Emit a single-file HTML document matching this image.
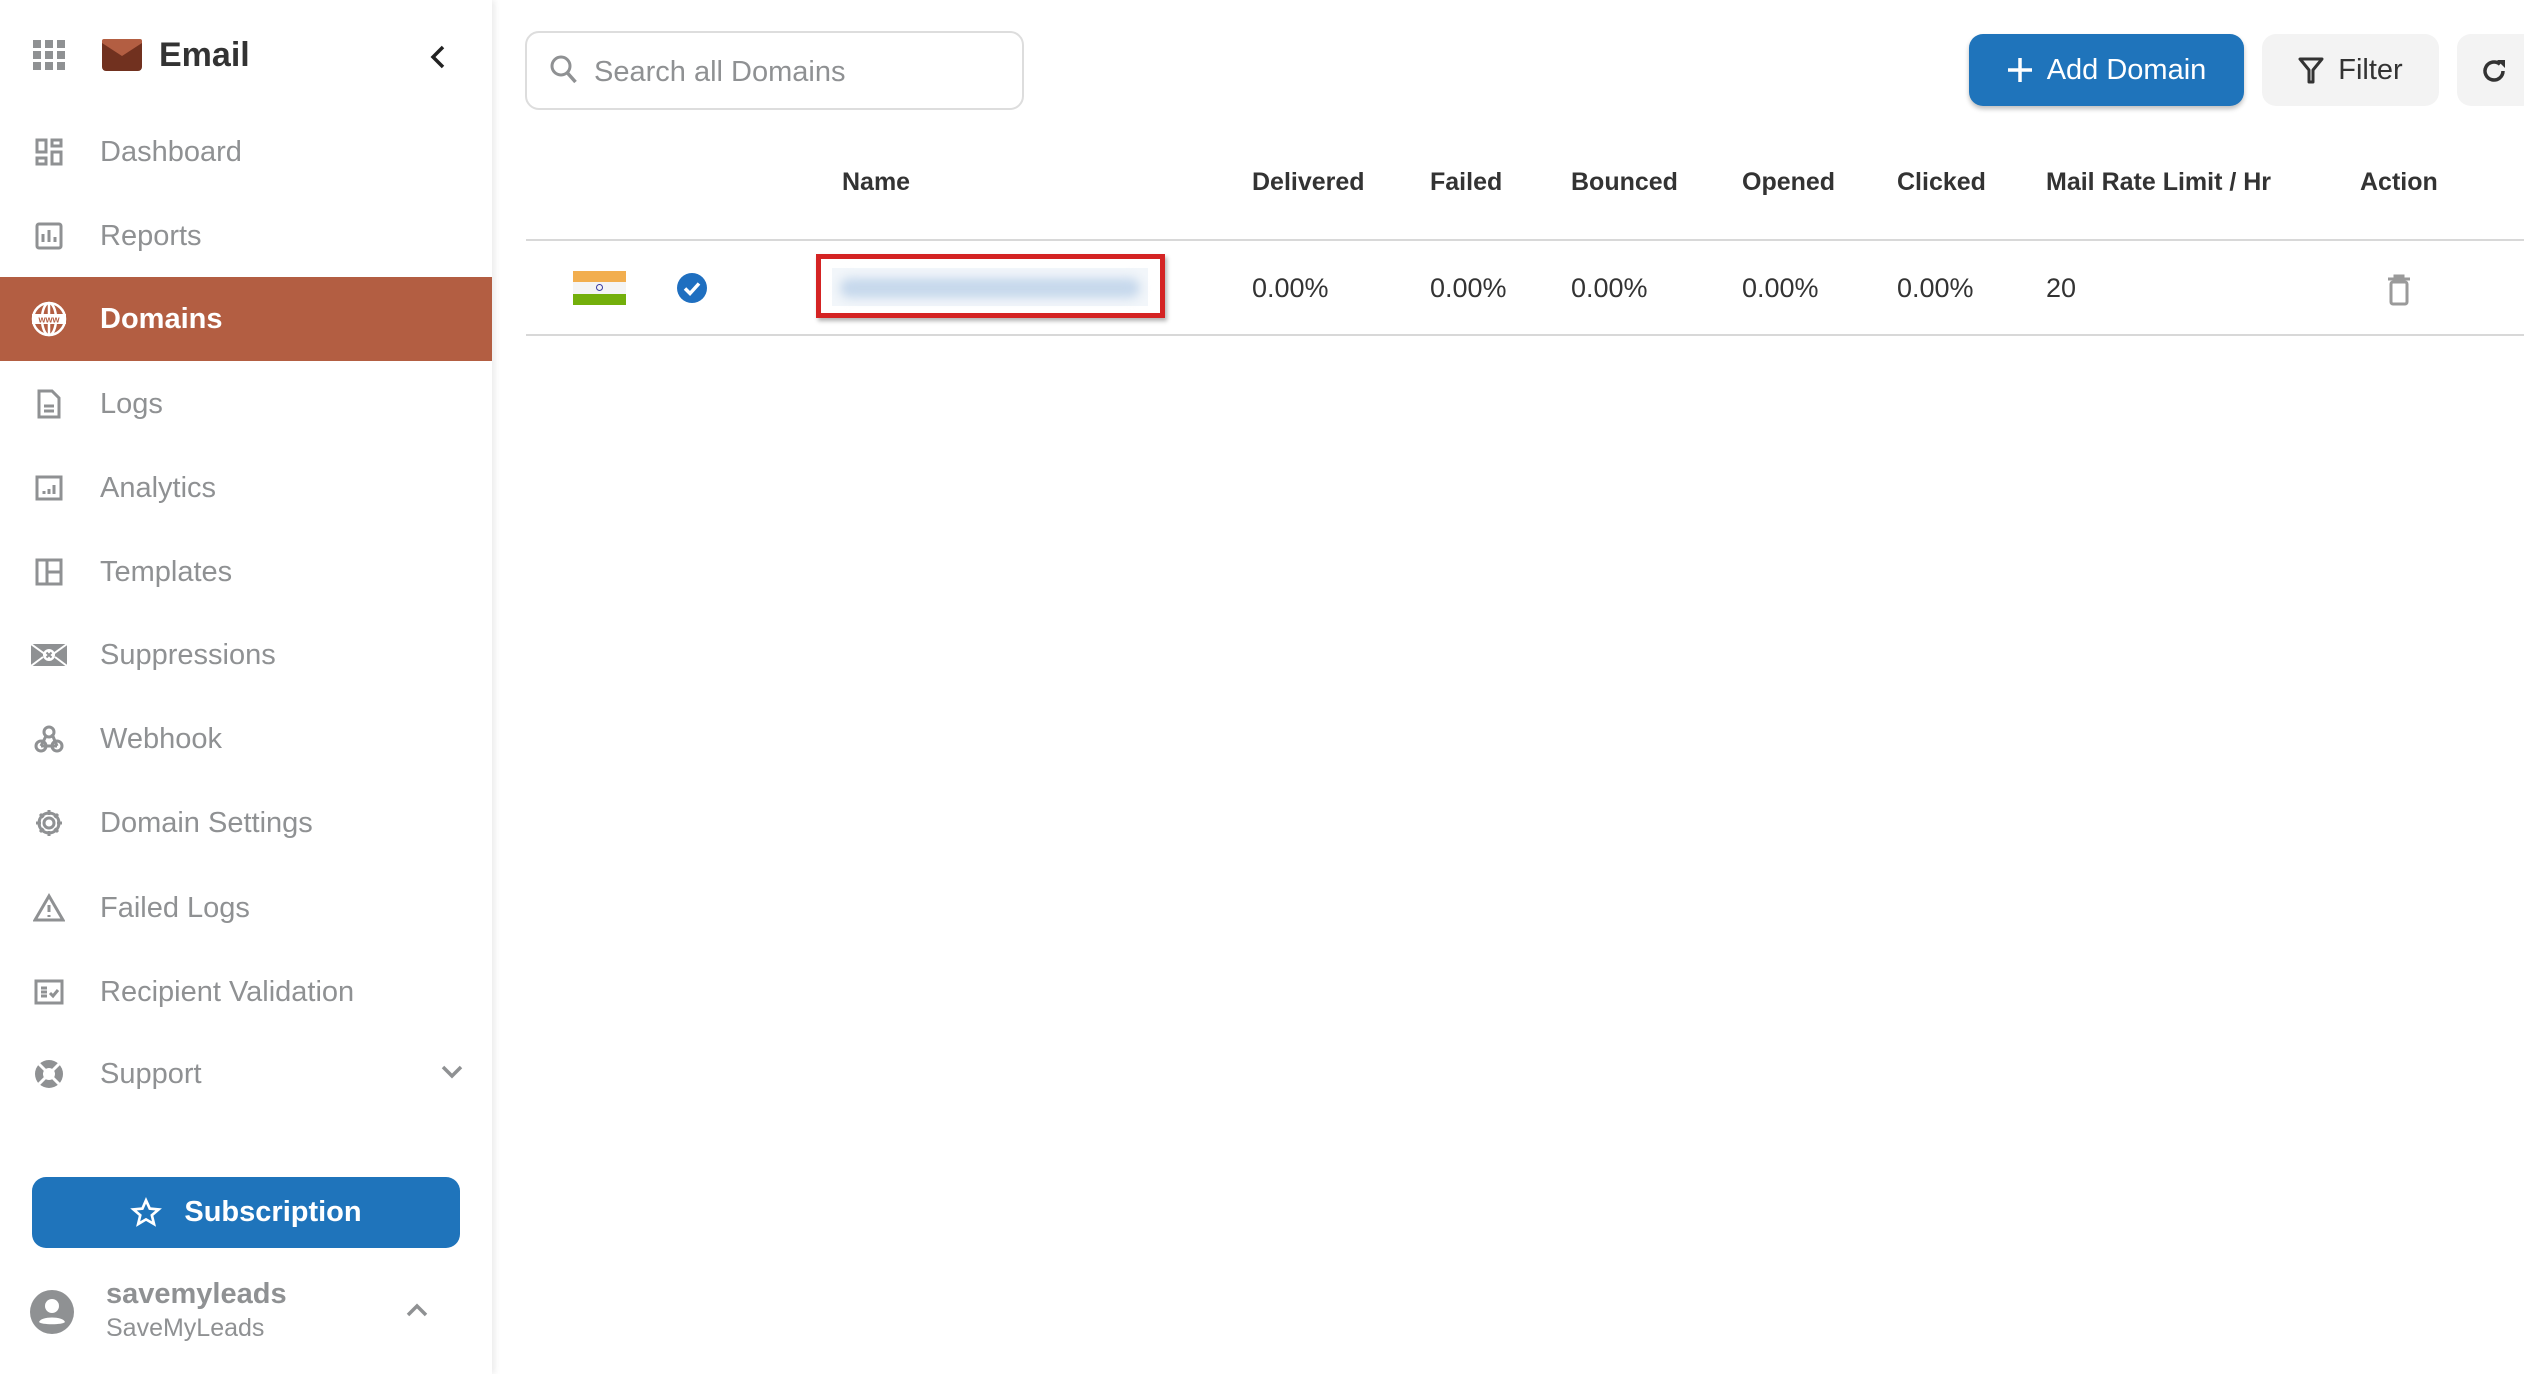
<!DOCTYPE html>
<html><head><meta charset="utf-8"><style>
*{margin:0;padding:0;box-sizing:border-box}
body{width:2524px;height:1374px;background:#fff;font-family:"Liberation Sans",sans-serif;position:relative;overflow:hidden}
.abs{position:absolute}
.side{position:absolute;left:0;top:0;width:492px;height:1374px;background:#fff;box-shadow:3px 0 6px rgba(0,0,0,.08)}
.item{position:absolute;left:0;width:492px;height:84px;display:flex;align-items:center;color:#8f9193;font-size:29px}
.item .ic{position:absolute;left:33px;top:26px;width:32px;height:32px}
.item span{position:absolute;left:100px}
.act{background:#b35e42;color:#fff;font-weight:bold}
.th{position:absolute;top:168px;font-size:25px;font-weight:bold;color:#333}
.td{position:absolute;top:273px;font-size:27px;color:#333}
</style></head><body>
<div class="side">
 <svg class="abs" style="left:33px;top:40px" width="32" height="30" viewBox="0 0 32 30" fill="#8f9193">
  <rect x="0" y="0" width="8" height="8"/><rect x="12" y="0" width="8" height="8"/><rect x="24" y="0" width="8" height="8"/>
  <rect x="0" y="11" width="8" height="8"/><rect x="12" y="11" width="8" height="8"/><rect x="24" y="11" width="8" height="8"/>
  <rect x="0" y="22" width="8" height="8"/><rect x="12" y="22" width="8" height="8"/><rect x="24" y="22" width="8" height="8"/></svg>
 <svg class="abs" style="left:102px;top:39px" width="40" height="32" viewBox="0 0 40 32"><rect width="40" height="32" rx="4" fill="#71311f"/><path d="M2 0h36a2 2 0 0 1 2 2v2L20 17 0 4V2a2 2 0 0 1 2-2z" fill="#b35e42"/></svg>
 <div class="abs" style="left:159px;top:36px;font-size:34px;font-weight:bold;color:#333">Email</div>
 <svg class="abs" style="left:428px;top:44px" width="20" height="26" viewBox="0 0 20 26"><path d="M15 3L5 13l10 10" stroke="#222" stroke-width="3.5" fill="none"/></svg>

 <div class="item" style="top:110px"><svg class="ic" viewBox="0 0 32 32" fill="none" stroke="#8f9193" stroke-width="3"><rect x="4" y="4" width="9" height="12"/><rect x="19" y="4" width="9" height="6"/><rect x="4" y="22" width="9" height="6"/><rect x="19" y="16" width="9" height="12"/></svg><span>Dashboard</span></div>
 <div class="item" style="top:194px"><svg class="ic" viewBox="0 0 32 32" fill="none" stroke="#8f9193" stroke-width="3"><rect x="4" y="4" width="24" height="24" rx="2"/><path d="M10 22v-8M16 22v-12M22 22v-5"/></svg><span>Reports</span></div>
 <div class="item act" style="top:277px"><svg class="ic" style="left:31px;top:24px;width:36px;height:36px" viewBox="0 0 36 36" fill="none" stroke="#fff" stroke-width="2.5"><circle cx="18" cy="18" r="16"/><ellipse cx="18" cy="18" rx="7" ry="16"/><path d="M18 2v32"/><rect x="1" y="13" width="34" height="10" fill="#fff" stroke="none"/><text x="18" y="21.5" font-size="9" font-weight="bold" fill="#b35e42" stroke="none" text-anchor="middle" font-family="Liberation Sans">www</text></svg><span>Domains</span></div>
 <div class="item" style="top:362px"><svg class="ic" viewBox="0 0 32 32" fill="none" stroke="#8f9193" stroke-width="3"><path d="M6 3h13l7 7v19H6z"/><path d="M11 18h10M11 23h10"/></svg><span>Logs</span></div>
 <div class="item" style="top:446px"><svg class="ic" viewBox="0 0 32 32" fill="none" stroke="#8f9193" stroke-width="3"><rect x="4" y="5" width="24" height="22"/><path d="M11 22v-3M16 22v-5M21 22v-9"/></svg><span>Analytics</span></div>
 <div class="item" style="top:530px"><svg class="ic" viewBox="0 0 32 32" fill="none" stroke="#8f9193" stroke-width="3"><rect x="4" y="4" width="24" height="24"/><path d="M14 4v24M14 16h14"/></svg><span>Templates</span></div>
 <div class="item" style="top:613px"><svg class="ic" style="left:31px;width:36px" viewBox="0 0 36 32"><rect x="0" y="5" width="36" height="22" fill="#8f9193"/><path d="M0 5l18 13L36 5M0 27l12-9M36 27l-12-9" stroke="#fff" stroke-width="2" fill="none"/><circle cx="18" cy="16" r="6" fill="#fff"/><path d="M15.5 13.5l5 5M20.5 13.5l-5 5" stroke="#8f9193" stroke-width="2"/></svg><span>Suppressions</span></div>
 <div class="item" style="top:697px"><svg class="ic" viewBox="0 0 32 32" fill="none" stroke="#8f9193" stroke-width="3"><circle cx="16" cy="9" r="5"/><circle cx="8" cy="23" r="5"/><circle cx="24" cy="23" r="5"/><path d="M13 13l-5 10M8 23h16M19 11l5 12"/></svg><span>Webhook</span></div>
 <div class="item" style="top:781px"><svg class="ic" viewBox="0 0 32 32" fill="none" stroke="#8f9193" stroke-width="3"><circle cx="16" cy="16" r="5"/><path d="M16 3v5M16 24v5M3 16h5M24 16h5M7 7l3.5 3.5M21.5 21.5L25 25M7 25l3.5-3.5M21.5 10.5L25 7"/><circle cx="16" cy="16" r="10"/></svg><span>Domain Settings</span></div>
 <div class="item" style="top:866px"><svg class="ic" viewBox="0 0 32 32" fill="none" stroke="#8f9193" stroke-width="3"><path d="M16 4L2 28h28z"/><path d="M16 13v7M16 23v2"/></svg><span>Failed Logs</span></div>
 <div class="item" style="top:950px"><svg class="ic" viewBox="0 0 32 32" fill="none" stroke="#8f9193" stroke-width="3"><rect x="3" y="5" width="26" height="22"/><path d="M8 12h6M8 16h6M8 20h6M17 17l3 3 5-6"/></svg><span>Recipient Validation</span></div>
 <div class="item" style="top:1032px"><svg class="ic" viewBox="0 0 32 32"><circle cx="16" cy="16" r="14" fill="#8f9193"/><circle cx="16" cy="16" r="6" fill="#fff"/><path d="M6 6l6 6M26 6l-6 6M6 26l6-6M26 26l-6-6" stroke="#fff" stroke-width="3"/></svg><span>Support</span>
  <svg class="abs" style="left:440px;top:32px" width="24" height="16" viewBox="0 0 24 16"><path d="M3 3l9 9 9-9" stroke="#8f9193" stroke-width="3.5" fill="none"/></svg></div>

 <div class="abs" style="left:32px;top:1177px;width:428px;height:71px;background:#1f74bb;border-radius:14px;color:#fff;font-size:29px;font-weight:bold;display:flex;align-items:center;justify-content:center">
  <svg width="32" height="32" viewBox="0 0 24 24" style="margin-right:22px"><path d="M12 2.5l2.8 6.2 6.7.6-5.1 4.4 1.6 6.6L12 16.8l-5.9 3.5 1.6-6.6-5.1-4.4 6.7-.6z" fill="none" stroke="#fff" stroke-width="2"/></svg>Subscription</div>
 <svg class="abs" style="left:30px;top:1290px" width="44" height="44" viewBox="0 0 44 44"><circle cx="22" cy="22" r="22" fill="#8f9193"/><circle cx="22" cy="16" r="7" fill="#fff"/><path d="M9 32c2-6 24-6 26 0c-2 3-24 3-26 0z" fill="#fff"/></svg>
 <div class="abs" style="left:106px;top:1278px;font-size:29px;font-weight:bold;color:#8f9193">savemyleads</div>
 <div class="abs" style="left:106px;top:1314px;font-size:25px;color:#8f9193">SaveMyLeads</div>
 <svg class="abs" style="left:405px;top:1302px" width="24" height="16" viewBox="0 0 24 16"><path d="M3 13l9-9 9 9" stroke="#8f9193" stroke-width="3.5" fill="none"/></svg>
</div>

<div class="abs" style="left:525px;top:31px;width:499px;height:79px;border:2px solid #ddd;border-radius:14px"></div>
<svg class="abs" style="left:549px;top:54px" width="30" height="32" viewBox="0 0 30 32"><circle cx="12" cy="12" r="9" stroke="#8f9193" stroke-width="3" fill="none"/><path d="M18.5 19l8 9" stroke="#8f9193" stroke-width="3.5"/></svg>
<div class="abs" style="left:594px;top:56px;font-size:29px;color:#8f9193">Search all Domains</div>

<div class="abs" style="left:1969px;top:34px;width:275px;height:72px;background:#1f74bb;border-radius:14px;box-shadow:0 3px 5px rgba(0,0,0,.25);color:#fff;font-size:29px;display:flex;align-items:center;justify-content:center">
 <svg width="26" height="26" viewBox="0 0 26 26" style="margin-right:14px"><path d="M13 1v24M1 13h24" stroke="#fff" stroke-width="3.5"/></svg>Add Domain</div>
<div class="abs" style="left:2262px;top:34px;width:177px;height:72px;background:#f3f3f3;border-radius:14px;color:#333;font-size:29px;display:flex;align-items:center;justify-content:center">
 <svg width="26" height="28" viewBox="0 0 26 28" style="margin-right:14px"><path d="M2 3h22L15 14v12h-4V14z" fill="none" stroke="#333" stroke-width="3" stroke-linejoin="round"/></svg>Filter</div>
<div class="abs" style="left:2457px;top:34px;width:80px;height:72px;background:#f3f3f3;border-radius:14px"></div>
<svg class="abs" style="left:2480px;top:57px" width="28" height="28" viewBox="0 0 28 28"><path d="M23 14a9 9 0 1 1-3-6.7" stroke="#333" stroke-width="3.5" fill="none"/><path d="M17 3h8v8z" fill="#333"/></svg>

<div class="th" style="left:842px">Name</div>
<div class="th" style="left:1252px">Delivered</div>
<div class="th" style="left:1430px">Failed</div>
<div class="th" style="left:1571px">Bounced</div>
<div class="th" style="left:1742px">Opened</div>
<div class="th" style="left:1897px">Clicked</div>
<div class="th" style="left:2046px">Mail Rate Limit / Hr</div>
<div class="th" style="left:2360px">Action</div>
<div class="abs" style="left:526px;top:239px;width:1998px;height:2px;background:#d8d8d8"></div>
<div class="abs" style="left:526px;top:334px;width:1998px;height:2px;background:#d8d8d8"></div>

<div class="abs" style="left:573px;top:271px;width:53px;height:34px">
 <div style="height:11px;background:#f2ae4e"></div><div style="height:12px;background:#f4f4f4;position:relative"><div style="position:absolute;left:23px;top:2px;width:7px;height:7px;border:1.5px solid #3a3aa0;border-radius:50%"></div></div><div style="height:11px;background:#73af0b"></div></div>
<svg class="abs" style="left:676px;top:272px" width="32" height="32" viewBox="0 0 32 32"><circle cx="16" cy="16" r="15" fill="#1f6fc0"/><path d="M9 16.5l5 5 9-10" stroke="#fff" stroke-width="3.5" fill="none"/></svg>
<div class="abs" style="left:816px;top:254px;width:349px;height:64px;border:5px solid #d42323;box-shadow:2px 3px 4px rgba(0,0,0,.3)"></div>
<div class="abs" style="left:832px;top:268px;width:316px;height:38px;background:#f2f6fa"></div>
<div class="abs" style="left:840px;top:278px;width:300px;height:20px;background:#c6d8ec;filter:blur(5px);border-radius:10px"></div>

<div class="td" style="left:1252px">0.00%</div>
<div class="td" style="left:1430px">0.00%</div>
<div class="td" style="left:1571px">0.00%</div>
<div class="td" style="left:1742px">0.00%</div>
<div class="td" style="left:1897px">0.00%</div>
<div class="td" style="left:2046px">20</div>
<svg class="abs" style="left:2386px;top:274px" width="26" height="32" viewBox="0 0 26 32"><path d="M2 5h22M9 5V2h8v3" stroke="#9a9a9a" stroke-width="3" fill="none"/><rect x="5" y="8" width="16" height="22" rx="2" stroke="#9a9a9a" stroke-width="3" fill="none"/></svg>
</body></html>
